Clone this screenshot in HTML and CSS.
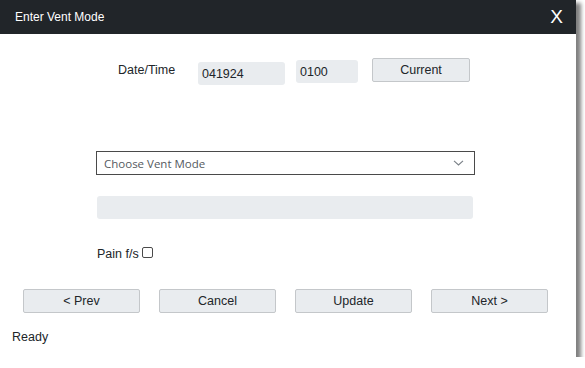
FILE: index.html
```html
<!DOCTYPE html>
<html>
<head>
<meta charset="utf-8">
<link rel="stylesheet" href="styles.css">
</head>
<body>
<div class="dialog">
  <div class="header">
    <span class="title">Enter Vent Mode</span>
    <span class="close">X</span>
  </div>
  <div class="content">
    <div class="date-row">
      <span class="label">Date/Time</span>
      <div class="field date">041924</div>
      <div class="field time">0100</div>
      <button class="btn current">Current</button>
    </div>
    <div class="select">
      <span>Choose Vent Mode</span>
      <svg class="chev" width="11" height="6" viewBox="0 0 11 6"><path d="M1 0.8 L5.5 5 L10 0.8" fill="none" stroke="#7a8087" stroke-width="1.1"/></svg>
    </div>
    <div class="bar"></div>
    <div class="pain"><span>Pain f/s</span><span class="check"></span></div>
    <div class="buttons">
      <button class="btn nav">&lt; Prev</button>
      <button class="btn nav">Cancel</button>
      <button class="btn nav">Update</button>
      <button class="btn nav">Next &gt;</button>
    </div>
    <div class="status">Ready</div>
  </div>
</div>
</body>
</html>
```

FILE: styles.css
```css
html, body {
  margin: 0;
  padding: 0;
  background: #ffffff;
}
body {
  font-family: "Liberation Sans", Arial, sans-serif;
  font-size: 12px;
  color: #212529;
}
.dialog {
  width: 576px;
  height: 357px;
  background: #ffffff;
  box-shadow: 4px 4px 4px 1px #808080;
  display: flex;
  flex-direction: column;
}
.header {
  height: 34px;
  background: #212529;
  display: flex;
  align-items: center;
  justify-content: space-between;
  padding: 0 13px 0 15px;
  color: #ffffff;
  flex: none;
}
.title {
  font-size: 12px;
}
.close {
  font-size: 19px;
  margin-top: -1px;
}
.content {
  display: flex;
  flex-direction: column;
  flex: 1;
}
.date-row {
  display: flex;
  align-items: center;
  margin: 24px 0 0 118px;
  height: 26px;
}
.label {
  width: 80px;
  font-size: 12.5px;
  margin-top: -3px;
}
.field {
  height: 23px;
  background: #e9ecef;
  border-radius: 3px;
  box-sizing: border-box;
  padding: 5px 4px 0 4px;
  font-size: 12.5px;
}
.date {
  width: 87px;
  margin-top: 4px;
}
.time {
  width: 62px;
  margin-left: 11px;
  margin-top: 1px;
}
.btn {
  font-family: "Liberation Sans", Arial, sans-serif;
  font-size: 12.5px;
  color: #212529;
  background: #e9ecef;
  border: 1px solid #c4c7ca;
  border-radius: 2px;
  box-sizing: border-box;
  height: 24px;
  padding: 0;
}
.current {
  width: 98px;
  margin-left: 14px;
  margin-top: -2px;
}
.select {
  margin: 67px 0 0 96px;
  width: 379px;
  height: 24px;
  box-sizing: border-box;
  border: 1px solid #4a4a4a;
  display: flex;
  align-items: center;
  justify-content: space-between;
  padding: 0 10px 0 7px;
  font-family: "Open Sans", "Noto Sans", sans-serif;
  font-size: 11.5px;
  color: #555a60;
}
.bar {
  margin: 21px 0 0 97px;
  width: 376px;
  height: 23px;
  background: #e9ecef;
  border-radius: 3px;
}
.pain {
  margin: 28px 0 0 97px;
  display: flex;
  align-items: center;
  font-size: 12.5px;
  height: 14px;
}
.check {
  width: 9px;
  height: 9px;
  border: 1px solid #4a4a4a;
  border-radius: 2px;
  margin: -3px 0 0 3px;
}
.buttons {
  display: flex;
  justify-content: space-between;
  width: 525px;
  margin: 28px 0 0 23px;
}
.nav {
  width: 117px;
}
.status {
  margin: 17px 0 0 12px;
  font-size: 12.5px;
}
```
